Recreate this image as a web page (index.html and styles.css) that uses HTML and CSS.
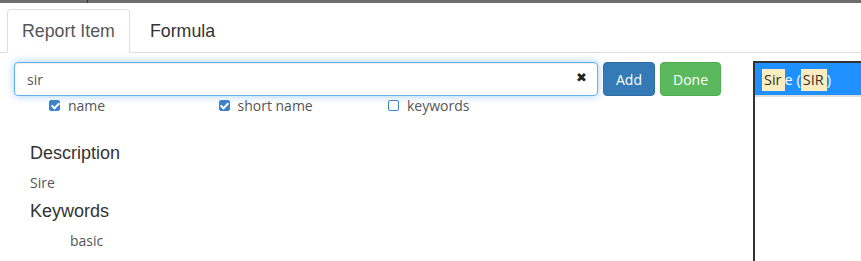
FILE: index.html
```html
<!DOCTYPE html>
<html lang="en">
<head>
    <meta charset="UTF-8">
    <title>Report Item</title>
    <link rel="stylesheet" href="styles.css">
</head>
<body>
<div class="topbar"><span class="topbar-sep"></span></div>

<ul class="tabs">
    <li class="tab active">Report Item</li>
    <li class="tab">Formula</li>
</ul>

<div class="content">
    <div class="main">
        <div class="search-row">
            <div class="search-box">
                <input type="text" class="search-input" value="sir">
                <span class="clear">&#10006;</span>
            </div>
            <button class="btn btn-add">Add</button>
            <button class="btn btn-done">Done</button>
        </div>

        <div class="filters">
            <label class="filter"><span class="check checked"></span>name</label>
            <label class="filter"><span class="check checked"></span>short name</label>
            <label class="filter"><span class="check"></span>keywords</label>
        </div>

        <div class="details">
            <h3>Description</h3>
            <p>Sire</p>
            <h3>Keywords</h3>
            <p class="keyword">basic</p>
        </div>
    </div>

    <div class="results">
        <div class="result selected"><mark>Sir</mark>e (<mark>SIR</mark>)</div>
    </div>
</div>
</body>
</html>
```

FILE: styles.css
```css
* {
    margin: 0;
    padding: 0;
    box-sizing: border-box;
}

body {
    background-color: #fff;
    font-family: "Open Sans", sans-serif;
    font-size: 14px;
    color: #555;
    height: 261px;
    overflow: hidden;
}

.topbar {
    height: 3px;
    background-color: #6e6e6e;
    position: relative;
}

.topbar-sep {
    position: absolute;
    left: 87px;
    top: 0;
    width: 1px;
    height: 3px;
    background-color: #333;
}

/* Tabs */
.tabs {
    list-style: none;
    display: flex;
    margin-top: 6px;
    padding-left: 7px;
    border-bottom: 1px solid #ddd;
    font-family: "Liberation Sans", Arial, sans-serif;
    font-size: 17.8px;
}

.tab {
    height: 44px;
    line-height: 43px;
    padding: 0 14px;
    margin-bottom: -1px;
    color: #333;
    border: 1px solid transparent;
    border-radius: 4px 4px 0 0;
}

.tab.active {
    color: #555;
    background-color: #fff;
    border-color: #ddd;
    border-bottom-color: #fff;
}

.tab + .tab {
    margin-left: 5px;
}

/* Layout */
.content {
    display: flex;
    padding-top: 9px;
}

.main {
    width: 753px;
    padding-left: 14px;
}

/* Search */
.search-row {
    display: flex;
    gap: 5px;
}

.search-box {
    position: relative;
    width: 584px;
    height: 34px;
}

.search-input {
    width: 100%;
    height: 34px;
    padding: 0 30px 0 12px;
    border: 1px solid #66afe9;
    border-radius: 4px;
    font-family: "Open Sans", sans-serif;
    font-size: 14px;
    color: #555;
    outline: none;
    box-shadow: inset 0 1px 1px rgba(0, 0, 0, 0.075), 0 0 8px rgba(102, 175, 233, 0.6);
}

.clear {
    position: absolute;
    right: 11px;
    top: 8px;
    font-size: 13px;
    color: #222;
    font-family: "DejaVu Sans", sans-serif;
}

.btn {
    height: 34px;
    border: 1px solid transparent;
    border-radius: 4px;
    color: #fff;
    font-family: "Open Sans", sans-serif;
    font-size: 14px;
    padding: 0 12px;
}

.btn-add {
    width: 52px;
    background-color: #337ab7;
    border-color: #2e6da4;
}

.btn-done {
    width: 61px;
    background-color: #5cb85c;
    border-color: #4cae4c;
}

/* Filters */
.filters {
    display: flex;
    padding-left: 35px;
    margin-top: -1px;
    height: 20px;
    align-items: center;
}

.filter {
    display: flex;
    align-items: center;
    width: 169.5px;
    color: #555;
}

.check {
    width: 11px;
    height: 11px;
    margin-right: 8px;
    border: 1.5px solid #3c84c9;
    border-radius: 2px;
    background-color: #fff;
    position: relative;
}

.check.checked {
    background-color: #3c84c9;
}

.check.checked::after {
    content: "";
    position: absolute;
    left: 2.5px;
    top: 0.5px;
    width: 3px;
    height: 6px;
    border: solid #fff;
    border-width: 0 2px 2px 0;
    transform: rotate(45deg);
}

/* Details */
.details {
    padding-left: 16px;
    margin-top: 28px;
}

.details h3 {
    font-family: "Liberation Sans", Arial, sans-serif;
    font-weight: normal;
    font-size: 18px;
    color: #333;
    line-height: 20px;
    margin-bottom: 10px;
}

.details p {
    line-height: 20px;
    margin-bottom: 8px;
}

.keyword {
    padding-left: 40px;
}

/* Results */
.results {
    flex: 1;
    height: 210px;
    border-left: 2px solid #333;
    border-top: 2px solid #333;
    margin-top: -1px;
}

.result {
    height: 34px;
    display: flex;
    align-items: center;
    padding-left: 7px;
    padding-top: 1px;
    border-bottom: 2px solid #ddd;
    white-space: pre;
    font-size: 14.5px;
}

.result.selected {
    background-color: #1e90ff;
    color: #fff;
}

.result mark {
    display: inline-block;
    background-color: #fbedbf;
    color: #333;
    line-height: 22px;
    padding: 0 3px 0 2px;
}
```
